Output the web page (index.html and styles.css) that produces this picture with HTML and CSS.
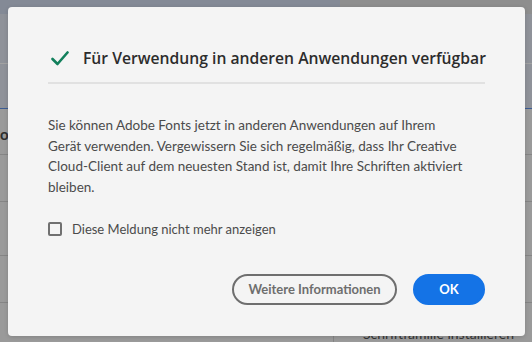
FILE: index.html
```html
<!DOCTYPE html>
<html lang="de">
<head>
<meta charset="utf-8">
<title>Adobe Fonts</title>
<link rel="stylesheet" href="styles.css">
</head>
<body>
<div class="app">
  <div class="app-top">
    <div class="app-top-left"></div>
    <div class="app-top-right"></div>
  </div>
  <div class="app-head"></div>
  <div class="app-row"><span class="row-text">o</span></div>
  <div class="app-row"></div>
  <div class="app-row tall"></div>
  <div class="app-row"></div>
  <div class="app-foot">
    <div class="foot-right"><span class="foot-icon"></span>Schriftfamilie installieren</div>
  </div>
</div>

<div class="modal" role="dialog">
  <div class="modal-header">
    <svg class="check" width="18" height="15" viewBox="0 0 18 15" aria-hidden="true">
      <path d="M1.5 8 L6.5 13 L16.5 1.5" fill="none" stroke="#12805c" stroke-width="2.6" stroke-linecap="round" stroke-linejoin="round"/>
    </svg>
    <h2 class="modal-title">Für Verwendung in anderen Anwendungen verfügbar</h2>
  </div>
  <p class="modal-body">Sie können Adobe Fonts jetzt in anderen Anwendungen auf Ihrem<br>Gerät verwenden. Vergewissern Sie sich regelmäßig, dass Ihr Creative<br>Cloud-Client auf dem neuesten Stand ist, damit Ihre Schriften aktiviert<br>bleiben.</p>
  <label class="check-row"><span class="box"></span>Diese Meldung nicht mehr anzeigen</label>
  <div class="actions">
    <button class="btn btn-outline">Weitere Informationen</button>
    <button class="btn btn-primary">OK</button>
  </div>
</div>
</body>
</html>
```

FILE: styles.css
```css
* { box-sizing: border-box; }
html, body { margin: 0; padding: 0; }
body {
  width: 532px;
  height: 342px;
  overflow: hidden;
  position: relative;
  background: #9a9a9a;
  font-family: "Lato", "Liberation Sans", sans-serif;
}

.app { display: flex; flex-direction: column; height: 342px; }
.app-top { display: flex; height: 15px; }
.app-top-left { width: 340px; background: #848a96; }
.app-top-right { flex: 1; background: #8e8e8e; }
.app-head {
  height: 98px;
  background: #8f9299;
  border-top: 49px solid #8f9299;
  border-bottom: 1px solid #3c5c94;
}
.app-head::before {
  content: "";
  display: block;
  height: 1px;
  background: #a2a2a2;
}
.app-row {
  height: 50px;
  border-bottom: 1px solid #858585;
  font-weight: 700;
  font-size: 15px;
  color: #2e2e2e;
}
.app-row.tall { height: 59px; }
.row-text { display: block; padding-top: 16px; }
.app-foot { flex: 1; display: flex; justify-content: flex-end; }
.foot-right {
  width: 199px;
  border-left: 1px solid #858585;
  padding: 22px 0 0 7px;
  font-size: 14px;
  color: #333;
  white-space: nowrap;
  display: flex;
  gap: 6px;
}
.foot-icon { width: 16px; height: 10px; background: #333; border-radius: 3px; }

.modal {
  position: absolute;
  left: 8px;
  top: 7px;
  width: 517px;
  height: 329px;
  background: #f4f4f4;
  border-radius: 4px;
  box-shadow: 0 1px 4px rgba(0,0,0,0.15);
  padding: 0 40px;
  display: flex;
  flex-direction: column;
}
.modal-header {
  display: flex;
  align-items: center;
  gap: 14px;
  height: 77px;
  padding-top: 27px;
  padding-left: 3px;
  border-bottom: 2px solid #e1e1e1;
}
.check { flex: none; }
.modal-title {
  margin: 0;
  font-family: "Open Sans", sans-serif;
  font-weight: 600;
  font-size: 15.7px;
  color: #2c2c2c;
  white-space: nowrap;
}
.modal-body {
  margin: 31px 0 0;
  font-size: 13.5px;
  line-height: 20.7px;
  color: #4b4b4b;
  white-space: nowrap;
}
.check-row {
  display: flex;
  align-items: center;
  gap: 10px;
  margin-top: 23px;
  font-size: 13px;
  color: #4b4b4b;
}
.box {
  width: 14px;
  height: 14px;
  border: 2px solid #707070;
  border-radius: 2px;
}
.actions {
  display: flex;
  justify-content: flex-end;
  gap: 16px;
  margin-top: 37px;
}
.btn {
  height: 31px;
  border-radius: 16px;
  font-family: "Lato", sans-serif;
  font-weight: 700;
  font-size: 13px;
  padding: 0;
  white-space: nowrap;
}
.btn-outline {
  width: 165px;
  background: transparent;
  border: 2px solid #6e6e6e;
  color: #6e6e6e;
}
.btn-primary {
  width: 72px;
  background: #1473e6;
  border: 2px solid #1473e6;
  color: #fff;
}
```
